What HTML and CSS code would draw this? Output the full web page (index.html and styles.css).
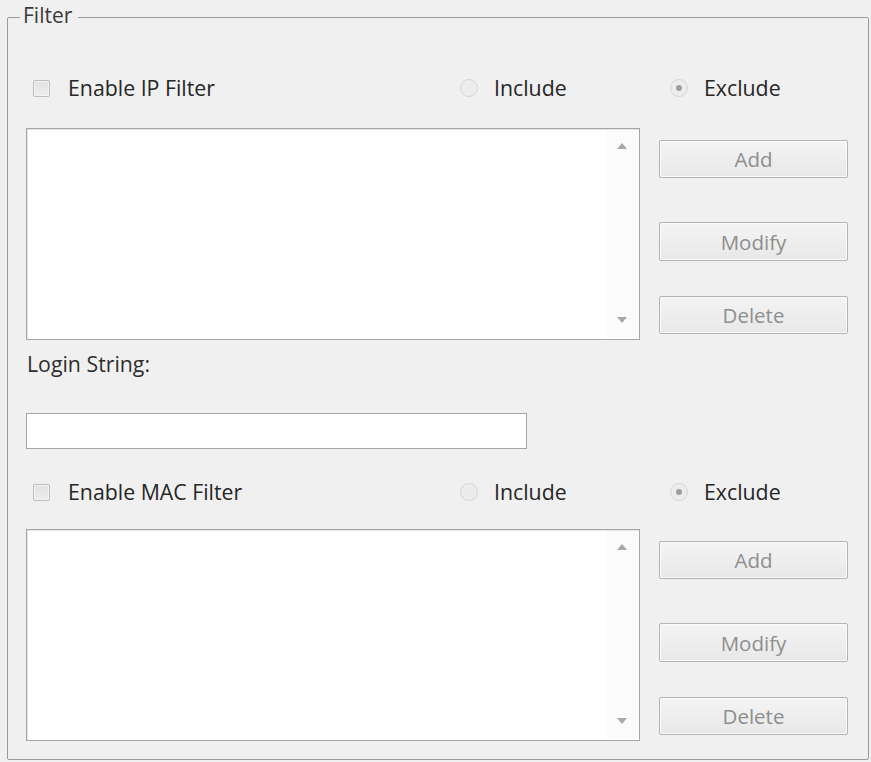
FILE: index.html
```html
<!DOCTYPE html>
<html>
<head>
<meta charset="utf-8">
<link rel="stylesheet" href="styles.css">
</head>
<body>
<fieldset class="group">
  <legend class="group-title">Filter</legend>

  <div class="opt-row opt-row-first">
    <label class="check"><span class="box"></span><span class="lbl">Enable IP Filter</span></label>
    <label class="radio"><span class="dot"></span><span class="lbl">Include</span></label>
    <label class="radio"><span class="dot on"></span><span class="lbl">Exclude</span></label>
  </div>

  <div class="list-row list-row-first">
    <div class="listbox">
      <div class="list-body"></div>
      <div class="scroll">
        <svg width="10" height="6" viewBox="0 0 10 6"><path d="M0 6 L5 0 L10 6 Z" fill="#a8a8a8"/></svg>
        <svg width="10" height="6" viewBox="0 0 10 6"><path d="M0 0 L10 0 L5 6 Z" fill="#a8a8a8"/></svg>
      </div>
    </div>
    <div class="buttons">
      <button class="btn btn-add" disabled>Add</button>
      <button class="btn btn-modify" disabled>Modify</button>
      <button class="btn btn-delete" disabled>Delete</button>
    </div>
  </div>

  <div class="login-label">Login String:</div>
  <div class="login-input"></div>

  <div class="opt-row opt-row-second">
    <label class="check"><span class="box"></span><span class="lbl">Enable MAC Filter</span></label>
    <label class="radio"><span class="dot"></span><span class="lbl">Include</span></label>
    <label class="radio"><span class="dot on"></span><span class="lbl">Exclude</span></label>
  </div>

  <div class="list-row list-row-second">
    <div class="listbox">
      <div class="list-body"></div>
      <div class="scroll">
        <svg width="10" height="6" viewBox="0 0 10 6"><path d="M0 6 L5 0 L10 6 Z" fill="#a8a8a8"/></svg>
        <svg width="10" height="6" viewBox="0 0 10 6"><path d="M0 0 L10 0 L5 6 Z" fill="#a8a8a8"/></svg>
      </div>
    </div>
    <div class="buttons">
      <button class="btn btn-add" disabled>Add</button>
      <button class="btn btn-modify" disabled>Modify</button>
      <button class="btn btn-delete" disabled>Delete</button>
    </div>
  </div>
</fieldset>
</body>
</html>
```

FILE: styles.css
```css
html, body {
  margin: 0;
  padding: 0;
  background: #f0f0f0;
}
body {
  font-family: "Open Sans", "Noto Sans", sans-serif;
  font-size: 21.3px;
  color: #262626;
  width: 871px;
  height: 762px;
  overflow: hidden;
}
.group {
  box-sizing: border-box;
  margin: 7px 1px 0 7px;
  width: 862px;
  height: 753px;
  border: 1px solid #9a9a9a;
  border-radius: 2px;
  padding: 0 19px 0 18px;
  min-width: 0;
}
.group-title {
  margin-left: -6px;
  padding: 0 6px 0 3px;
  font-size: 21px;
  line-height: 20px;
  position: relative;
  top: -2px;
  color: #3a3a3a;
}
.opt-row {
  display: grid;
  grid-template-columns: 432px 210px 1fr;
  align-items: center;
  height: 24px;
}
.opt-row-first { margin-top: 49px; }
.opt-row-second { margin-top: 31px; }
.check, .radio {
  display: flex;
  align-items: center;
  white-space: nowrap;
}
.box {
  box-sizing: border-box;
  width: 17px;
  height: 17px;
  margin-left: 7px;
  margin-right: 18px;
  border: 1px solid #bdbdbd;
  border-radius: 2px;
  background: linear-gradient(#e2e2e2, #ededed);
  box-shadow: inset 0 0 0 1px #f3f3f3;
}
.dot {
  box-sizing: border-box;
  width: 18px;
  height: 18px;
  margin-left: 2px;
  margin-right: 16px;
  border-radius: 50%;
  border: 1px solid #d6d6d6;
  background: #ececec;
  position: relative;
}
.dot.on::after {
  content: "";
  position: absolute;
  left: 5px;
  top: 5px;
  width: 6px;
  height: 6px;
  border-radius: 50%;
  background: #9e9e9e;
}
.lbl { line-height: 24px; }

.list-row {
  display: flex;
  gap: 19px;
  height: 212px;
}
.list-row-first { margin-top: 28px; }
.list-row-second { margin-top: 25px; }
.listbox {
  box-sizing: border-box;
  width: 614px;
  height: 212px;
  border: 1px solid #a6a6a6;
  background: #fff;
  display: flex;
  box-shadow: inset 1px 1px 0 #e6e6e6;
}
.list-body { flex: 1; }
.scroll {
  width: 32px;
  background: #fbfbfb;
  display: flex;
  flex-direction: column;
  justify-content: space-between;
  align-items: center;
  padding: 13px 0 15px;
  margin: 1px 1px 1px 0;
}
.buttons {
  display: flex;
  flex-direction: column;
  width: 189px;
}
.btn {
  box-sizing: border-box;
  width: 189px;
  height: 38px;
  border: 1px solid #b4b4b4;
  border-radius: 2px;
  background: linear-gradient(#f4f4f4, #e8e8e8);
  box-shadow: inset 0 0 0 1px #fafafa;
  font-family: "Open Sans", "Noto Sans", sans-serif;
  font-size: 20.5px;
  color: #8e8e8e;
  padding: 0;
}
.btn-add { margin-top: 12px; }
.btn-modify { margin-top: 44px; height: 39px; }
.btn-delete { margin-top: 35px; }

.login-label {
  margin-top: 12px;
  margin-left: 1px;
  height: 24px;
  line-height: 24px;
  color: #2e2e2e;
}
.login-input {
  box-sizing: border-box;
  margin-top: 37px;
  width: 501px;
  height: 36px;
  border: 1px solid #a6a6a6;
  background: #fff;
}
```
